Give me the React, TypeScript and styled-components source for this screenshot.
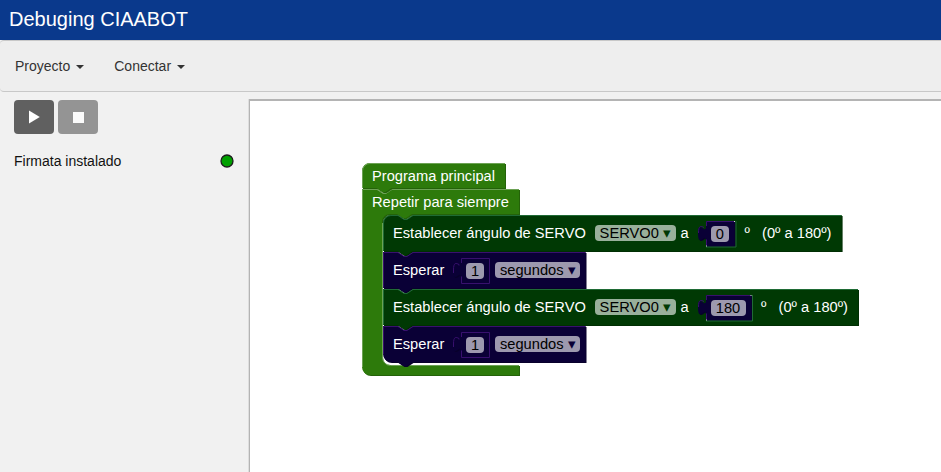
import React from "react";
import styled, { createGlobalStyle } from "styled-components";

const GlobalStyle = createGlobalStyle`
  * { box-sizing: border-box; }
  html, body { margin: 0; height: 100%; overflow: hidden; }
  body { background: #f1f1f1; font-family: "Liberation Sans", Arial, sans-serif; color: #111; }
`;

const Page = styled.div`
  display: flex;
  flex-direction: column;
  height: 100vh;
`;

const TitleBar = styled.header`
  height: 40px;
  flex: none;
  padding: 0 9px;
  background: #0a398c;
  color: #fff;
  font-size: 20px;
  line-height: 38px;
`;

const MenuBar = styled.nav`
  display: flex;
  align-items: center;
  gap: 30px;
  height: 52px;
  flex: none;
  padding: 0 15px;
  background: #eee;
  border: solid #c8c8c8;
  border-width: 1px 0;
  border-radius: 4px 0 0 4px;
`;

const MenuItem = styled.button`
  display: flex;
  align-items: center;
  gap: 6px;
  padding: 0;
  border: 0;
  background: none;
  color: #333;
  font: 14px/20px "Liberation Sans", Arial, sans-serif;
`;

const Caret = styled.span`
  margin-top: 2px;
  border-top: 4px solid #333;
  border-left: 4px solid transparent;
  border-right: 4px solid transparent;
`;

const Main = styled.main`
  display: flex;
  flex: 1;
  min-height: 0;
`;

const Sidebar = styled.aside`
  width: 249px;
  flex: none;
  padding: 8px 15px 0 14px;
`;

const Controls = styled.div`
  display: flex;
  gap: 4px;
`;

const ControlButton = styled.button<{ $muted?: boolean }>`
  display: flex;
  align-items: center;
  justify-content: center;
  width: 40px;
  height: 34px;
  padding: 0;
  border: 0;
  border-radius: 4px;
  background: ${(p) => (p.$muted ? "#949494" : "#606060")};
`;

const Status = styled.div`
  display: flex;
  align-items: center;
  justify-content: space-between;
  margin-top: 17px;
  font-size: 14px;
  line-height: 20px;
`;

const LedIcon = styled.svg`
  flex: none;
`;

const Workspace = styled.section`
  position: relative;
  flex: 1;
  margin-top: 7px;
  border: solid #b4b4b4;
  border-width: 2px 0 0 1px;
  box-shadow: -1px 0 0 #dedede;
  background: #fff;
`;

const BlockNode = styled.div<{ $x: number; $y: number }>`
  position: absolute;
  left: ${(p) => p.$x}px;
  top: ${(p) => p.$y}px;
`;

const Outline = styled.svg`
  position: absolute;
  left: 0;
  top: 0;
  overflow: visible;
`;

const Fields = styled.div<{ $height: number }>`
  position: relative;
  display: flex;
  align-items: center;
  height: ${(p) => p.$height}px;
  padding-left: 10px;
  color: #fff;
  font-size: 14.667px;
  line-height: 17px;
  white-space: pre;
`;

const Label = styled.span<{ $width?: number; $indent?: number }>`
  width: ${(p) => (p.$width ? `${p.$width}px` : "auto")};
  padding-left: ${(p) => p.$indent ?? 0}px;
`;

const Pill = styled.span<{ $width: number; $tone: "green" | "violet" }>`
  position: relative;
  width: ${(p) => p.$width}px;
  height: 16px;
  border-radius: 4px;
  background: ${(p) => (p.$tone === "green" ? "#99b09b" : "#9d99ae")};
  color: #000;
  line-height: 17px;
  text-align: center;
`;

const Arrow = styled.span<{ $tone: "green" | "violet" }>`
  color: ${(p) => (p.$tone === "green" ? "#003904" : "#0a0036")};
`;

const Socket = styled.div<{ $width: number }>`
  position: relative;
  display: flex;
  align-items: center;
  width: ${(p) => p.$width}px;
  height: 26px;
  margin-top: 2px;
  padding-left: 5px;
`;

type Paint = { fill: string; light: string; dark: string };
const LEAF: Paint = { fill: "#2d7a0b", light: "#6ca254", dark: "#246209" };
const FOREST: Paint = { fill: "#003904", light: "#1f6b35", dark: "#002e03" };
const NIGHT: Paint = { fill: "#0a0036", light: "#38106e", dark: "#08002b" };

function Shape({ d, edge, paint }: { d: string; edge: string; paint: Paint }) {
  return (
    <Outline width="1" height="1">
      <path d={d} fill={paint.dark} transform="translate(1,1)" />
      <path d={d} fill={paint.fill} />
      <path d={edge} fill="none" stroke={paint.light} strokeWidth="1" />
    </Outline>
  );
}

const NOTCH = "H 15 l 6,4 3,0 6,-4";
const TAB = "V 20 c 0,-10 -8,8 -8,-7.5 s 8,2.5 8,-7.5";

function ValueSocket({ width, pill, value, joined }: { width: number; pill: number; value: string; joined?: boolean }) {
  const w = width;
  return (
    <Socket $width={w}>
      <Shape
        d={`M 0,0 H ${w - 1} V 25 H 0 ${TAB} Z`}
        edge={
          joined
            ? `M 0.5,24.5 V 18.5 M -2,6.5 C -5,5 -7.5,4 -7.5,12 M 0.5,5 V 0.5 H ${w - 1.5}`
            : `M 0.5,25.5 V 18.5 M -2,7.5 V 6.5 C -5,5 -7.5,4 -7.5,12 V 15 M 0.5,5 V 0.5 H ${w - 0.5} V 25.5 H 0.5`
        }
        paint={NIGHT}
      />
      {joined && (
        <Outline width="1" height="1">
          <path d={`M 0,26 H ${w + 0.5} V 0`} fill="none" stroke="#1f6b35" />
          <path d={`M 0,25 h 1 M ${w - 1.5},0.5 h 1`} stroke="#d7d4e0" />
        </Outline>
      )}
      <Pill $width={pill} $tone="violet">{value}</Pill>
    </Socket>
  );
}

function StatementShape({ width, paint, rounded }: { width: number; paint: Paint; rounded?: "top" | "bottom" }) {
  const start = rounded === "top" ? "M 0,8 A 8,8 0 0,1 8,0" : "M 0,0";
  const end = rounded === "bottom" ? "H 8 a 8,8 0 0,1 -8,-8" : "H 0";
  return (
    <Shape
      d={`${start} ${NOTCH} H ${width} v 36 H 29.5 l -6,4 -3,0 -6,-4 ${end} Z`}
      edge={
        rounded === "top"
          ? `M 0.5,35.5 V 8 A 7.5,7.5 0 0,1 8,0.5 ${NOTCH} H ${width}`
          : `M 0.5,${rounded === "bottom" ? 28 : 35.5} V 0.5 ${NOTCH} H ${width}`
      }
      paint={paint}
    />
  );
}

function ServoBlock({ y, value, first }: { y: number; value: string; first?: boolean }) {
  const wide = value.length > 1;
  return (
    <BlockNode $x={133} $y={y}>
      <StatementShape width={wide ? 475 : 458.6} paint={FOREST} rounded={first ? "top" : undefined} />
      <Fields $height={36}>
        <Label $width={202}>Establecer ángulo de SERVO</Label>
        <Pill $width={80.5} $tone="green">SERVO0 <Arrow $tone="green">▾</Arrow></Pill>
        <Label $width={30} $indent={5}>a</Label>
        <ValueSocket width={wide ? 46 : 29.5} pill={wide ? 35 : 18.5} value={value} joined />
        <Label $indent={9.5}>{"º   (0º a 180º)"}</Label>
      </Fields>
    </BlockNode>
  );
}

function WaitBlock({ y, last }: { y: number; last?: boolean }) {
  return (
    <BlockNode $x={133} $y={y}>
      <StatementShape width={202.5} paint={NIGHT} rounded={last ? "bottom" : undefined} />
      <Fields $height={36}>
        <Label $width={68}>Esperar</Label>
        <ValueSocket width={29} pill={18} value="1" />
        <Label $width={5.3} />
        <Pill $width={85} $tone="violet">segundos <Arrow $tone="violet">▾</Arrow></Pill>
      </Fields>
    </BlockNode>
  );
}

export default function App() {
  return (
    <Page>
      <GlobalStyle />
      <TitleBar>Debuging CIAABOT</TitleBar>
      <MenuBar>
        <MenuItem>Proyecto<Caret /></MenuItem>
        <MenuItem>Conectar<Caret /></MenuItem>
      </MenuBar>
      <Main>
        <Sidebar>
          <Controls>
            <ControlButton aria-label="Ejecutar">
              <svg width="12" height="14"><path d="M1 0.5 L11.8 7 L1 13.5 Z" fill="#fff" /></svg>
            </ControlButton>
            <ControlButton $muted aria-label="Detener">
              <svg width="11" height="11"><rect width="11" height="11" fill="#fbfbfb" /></svg>
            </ControlButton>
          </Controls>
          <Status>
            Firmata instalado
            <LedIcon width="14" height="14">
              <circle cx="7" cy="7" r="6" fill="#00a000" stroke="#1c1c1c" strokeWidth="1.3" />
            </LedIcon>
          </Status>
        </Sidebar>
        <Workspace>
          <BlockNode $x={112} $y={88}>
            <Shape
              d={`M 0,0 ${NOTCH} H 157 v 25 H 50 l -6,4 -3,0 -6,-4 h -7 a 8,8 0 0,0 -8,8 v 135 a 8,8 0 0,0 8,8 H 157 v 10 H 8 a 8,8 0 0,1 -8,-8 Z`}
              edge={`M 0.5,178 V 0.5 ${NOTCH} H 157 M 20.5,34 V 168 a 8,8 0 0,0 8,8.5 H 157`}
              paint={LEAF}
            />
            <Fields $height={27}>Repetir para siempre</Fields>
          </BlockNode>
          <BlockNode $x={112} $y={62}>
            <Shape
              d="M 0,8 A 8,8 0 0,1 8,0 H 143 v 25 H 29.5 l -6,4 -3,0 -6,-4 H 0 Z"
              edge="M 0.5,25 V 8 A 7.5,7.5 0 0,1 8,0.5 H 143"
              paint={LEAF}
            />
            <Fields $height={27}>Programa principal</Fields>
          </BlockNode>
          <ServoBlock y={114} value="0" first />
          <WaitBlock y={151} />
          <ServoBlock y={188} value="180" />
          <WaitBlock y={225} last />
        </Workspace>
      </Main>
    </Page>
  );
}
